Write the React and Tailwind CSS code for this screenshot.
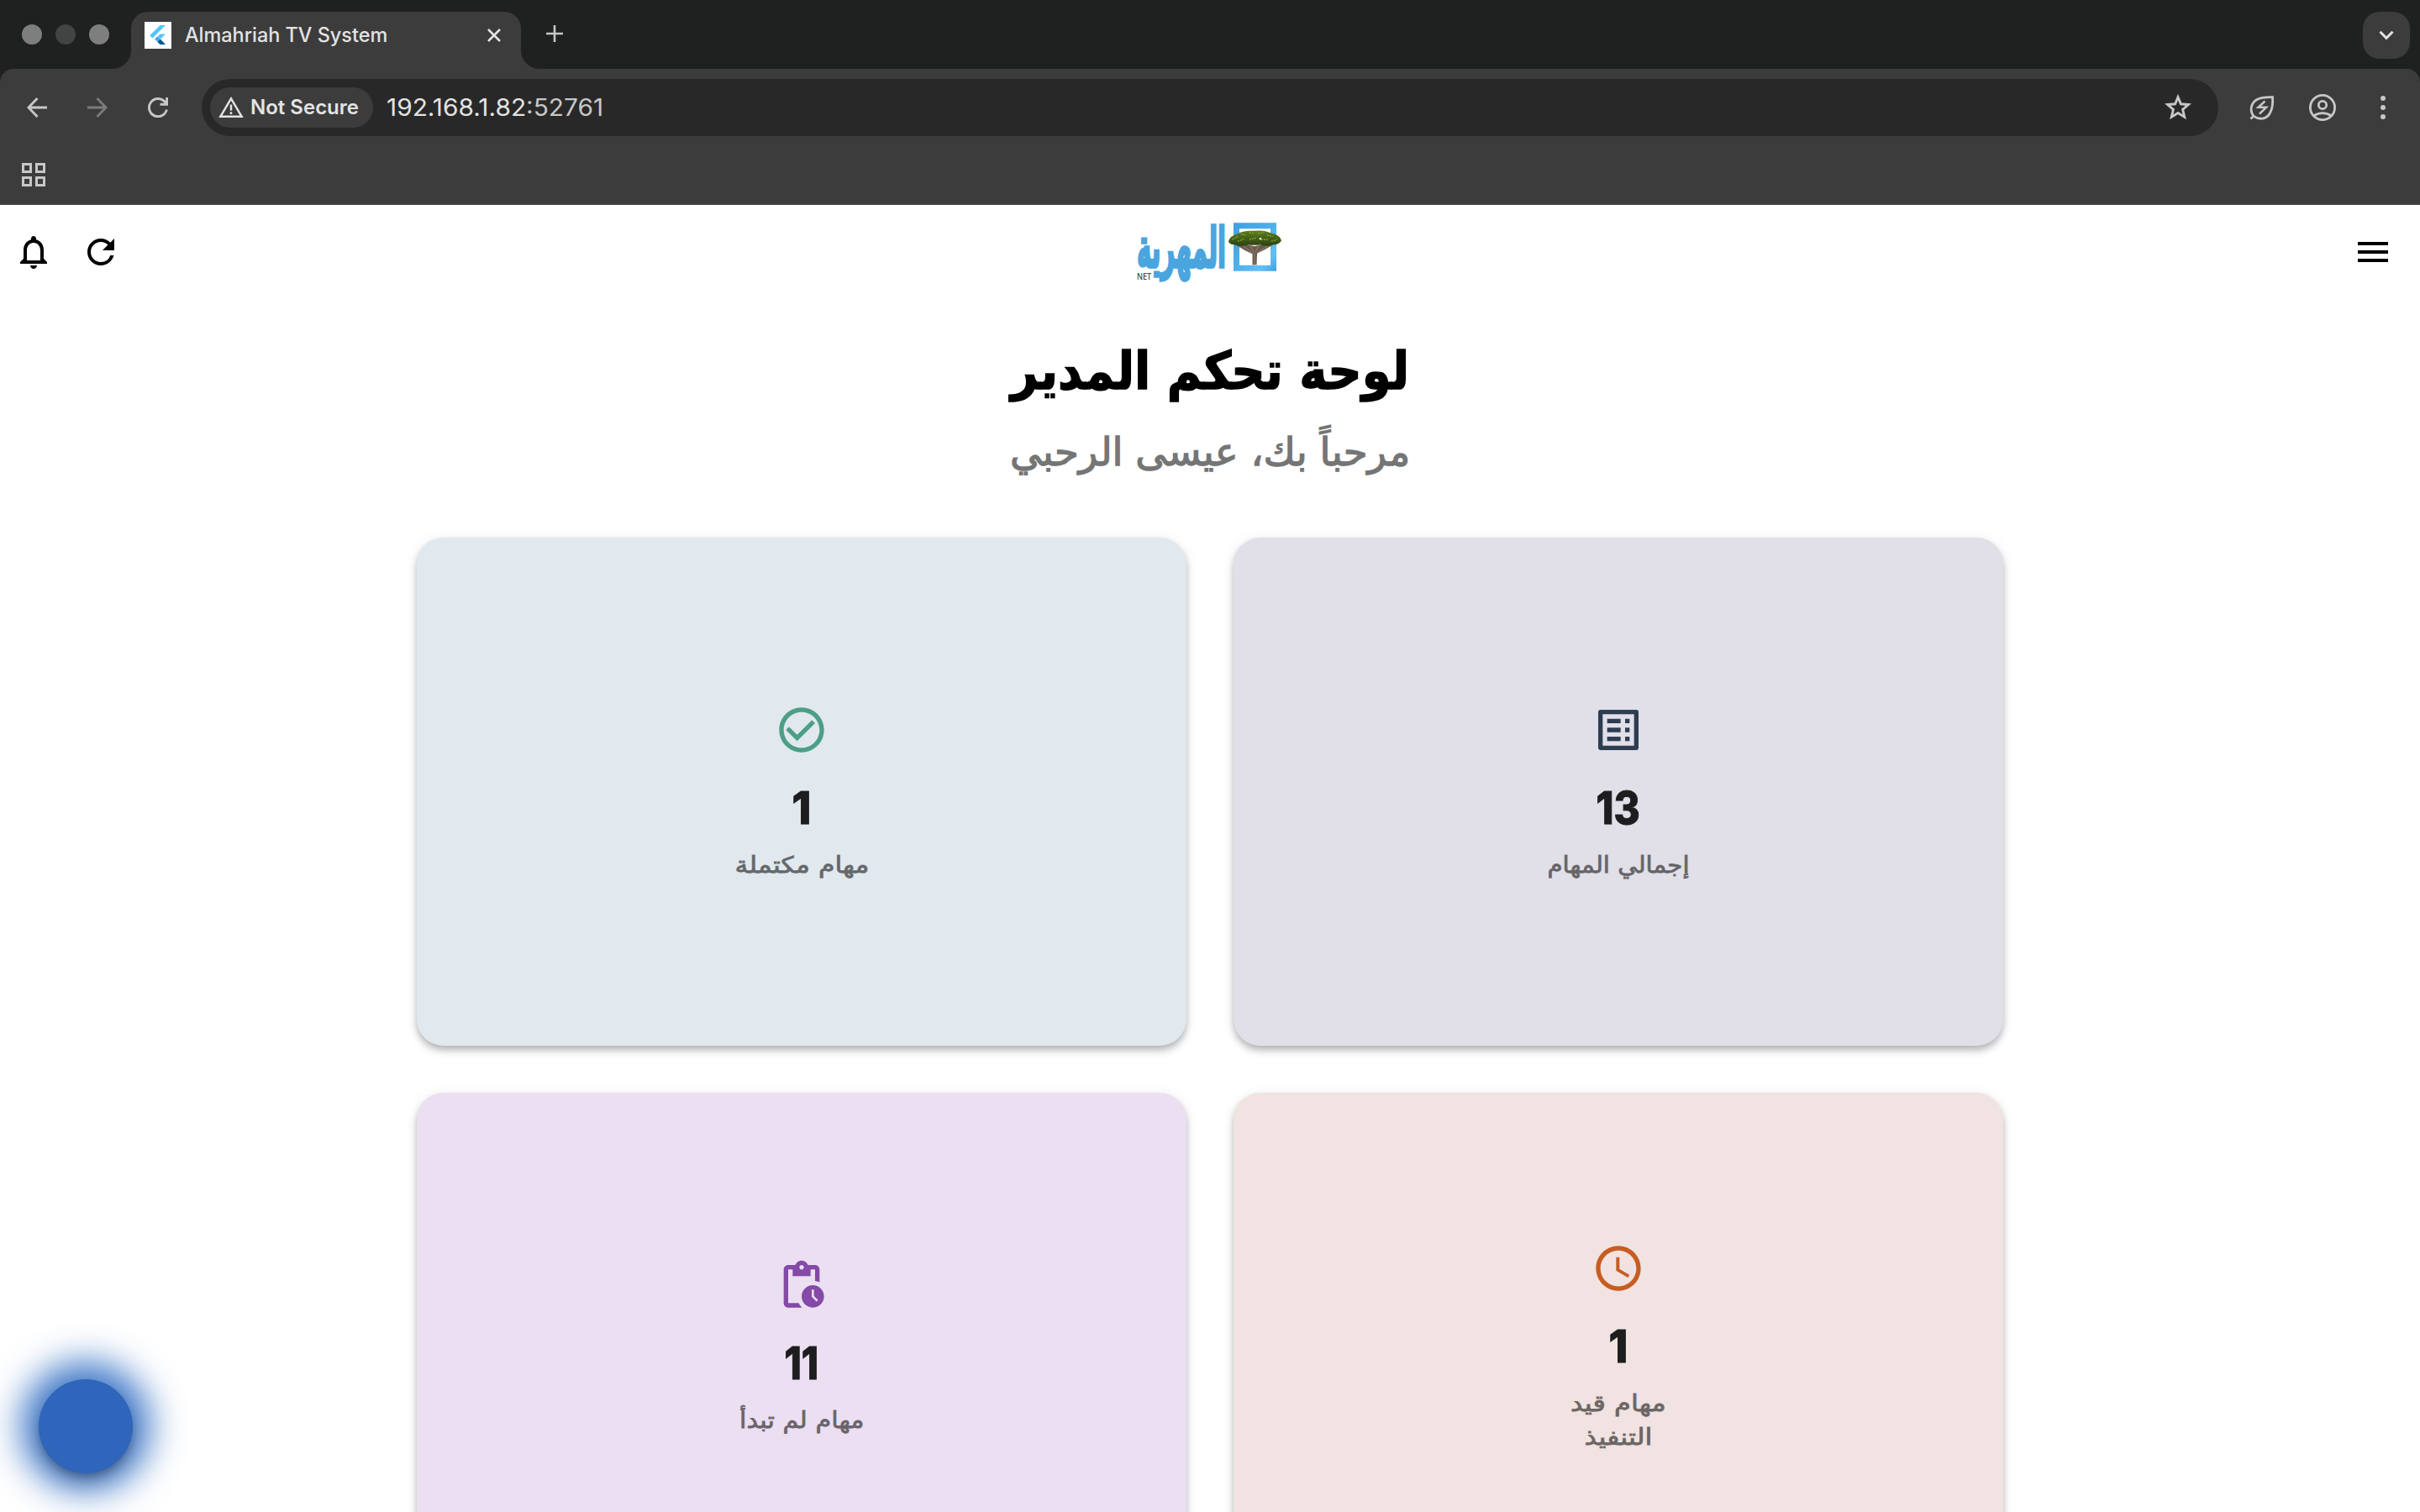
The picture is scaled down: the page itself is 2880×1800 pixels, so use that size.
import { useLayoutEffect, useRef, useState } from "react";
import {
  MdAccessTime,
  MdCheckCircleOutline,
  MdListAlt,
  MdMenu,
  MdPendingActions,
  MdRefresh,
} from "react-icons/md";

/* A line of text stretched horizontally to an exact width. */
function Fit({ width, className = "", children, dir }) {
  const ref = useRef(null);
  const [scale, setScale] = useState(1);
  useLayoutEffect(() => {
    setScale(width / ref.current.offsetWidth);
  }, [width]);
  return (
    <span className="flex shrink-0 justify-center" style={{ width }} dir={dir}>
      <span
        ref={ref}
        className={"inline-block shrink-0 whitespace-nowrap " + className}
        style={{ transform: `scaleX(${scale})` }}
      >
        {children}
      </span>
    </span>
  );
}

function FlutterIcon() {
  return (
    <svg viewBox="0 0 32 32" className="size-8 shrink-0 bg-white">
      <path d="M18.5 4H25L9.5 19.5 6.2 16.2Z" fill="#54c5f8" />
      <path d="M18.5 14.5H25L19 20.5l-3.2-3.2Z" fill="#54c5f8" />
      <path d="M12.2 20.6l3.3-3.3 3.3 3.3-3.3 3.3Z" fill="#3fa9f0" />
      <path d="M15.5 23.9l3.3-3.3L25 27h-6.5Z" fill="#01579b" />
    </svg>
  );
}

function TabStrip() {
  return (
    <div className="flex h-[82px] shrink-0 items-end bg-[#1f2120]">
      <div className="flex h-[82px] w-[134px] items-center gap-4 pl-[26px]">
        <span className="size-6 rounded-full bg-[#7e7e7e]" />
        <span className="size-6 rounded-full bg-[#424443]" />
        <span className="size-6 rounded-full bg-[#7e7e7e]" />
      </div>
      <div className="size-[22px] bg-[#3c3c3c]">
        <div className="size-full rounded-br-[22px] bg-[#1f2120]" />
      </div>
      <div className="flex h-[68px] w-[464px] items-center rounded-t-[20px] bg-[#3c3c3c] pb-3 pl-4">
        <FlutterIcon />
        <div className="ml-4">
          <Fit width={241} className="text-[24px] leading-8 font-medium text-[#e3e3e3]">
            Almahriah TV System
          </Fit>
        </div>
        <svg viewBox="0 0 16 16" className="ml-[119px] size-4" stroke="#e3e3e3" strokeWidth="2.6">
          <path d="M1 1 15 15M15 1 1 15" />
        </svg>
      </div>
      <div className="size-[22px] bg-[#3c3c3c]">
        <div className="size-full rounded-bl-[22px] bg-[#1f2120]" />
      </div>
      <svg viewBox="0 0 20 20" className="mb-8 ml-2 size-5" stroke="#c7c7c7" strokeWidth="2.6">
        <path d="M10 0V20M0 10H20" />
      </svg>
      <div className="mr-3 mb-3 ml-auto flex size-14 items-center justify-center rounded-[20px] bg-[#3c3c3c]">
        <svg viewBox="0 0 18 12" className="h-3 w-[18px]" fill="none" stroke="#e3e3e3" strokeWidth="3">
          <path d="M1.5 1.8 9 9.3 16.5 1.8" />
        </svg>
      </div>
    </div>
  );
}

function Toolbar() {
  return (
    <div className="shrink-0 bg-[#1f2120]">
      <div className="flex h-[92px] items-center rounded-t-2xl bg-[#3c3c3c]">
        <div className="flex w-60 items-center gap-12 pl-8">
          <svg viewBox="0 0 24 24" className="size-6" fill="none" stroke="#c7c7c7" strokeWidth="2.9">
            <path d="M12.5 1 1.9 12 12.5 23M2 12H24" />
          </svg>
          <svg viewBox="0 0 24 24" className="size-6" fill="none" stroke="#7b7b7b" strokeWidth="2.9">
            <path d="M11.5 1 22.1 12 11.5 23M22 12H0" />
          </svg>
          <svg viewBox="0 0 24 24" className="size-6" fill="none" stroke="#c7c7c7" strokeWidth="2.9">
            <path d="M22.4 14.5A10.6 10.6 0 1 1 20.4 5.5L23 8.3M22.6 0V8.3H14.5" />
          </svg>
        </div>
        <div className="flex h-[68px] w-[2400px] items-center rounded-full bg-[#282828] pl-2.5">
          <div className="flex h-12 w-[194px] items-center rounded-full bg-[#3c3c3c] pl-2.5">
            <svg viewBox="0 0 30 26" className="h-[26px] w-[30px]" fill="none" stroke="#e3e3e3" strokeWidth="2.5">
              <path d="M15 2.4 27.6 23.7H2.4ZM15 9.5V16.5M15 18.3V21" />
            </svg>
            <div className="ml-2">
              <Fit width={129} className="text-[24px] leading-8 font-semibold text-[#e3e3e3]">
                Not Secure
              </Fit>
            </div>
          </div>
          <div className="ml-4">
            <Fit width={258} className="text-[28px] leading-9 text-[#e3e3e3]">
              192.168.1.82<span className="text-[#c7c7c7]">:52761</span>
            </Fit>
          </div>
          <svg viewBox="0 0 32 32" className="mr-8 ml-auto size-8" fill="none" stroke="#c7c7c7" strokeWidth="2.9">
            <path d="M16 3.6 19.4 11.8 28.4 12.5 21.6 18.300 23.700 27.200 16 22.400 8.300 27.200 10.400 18.300 3.600 12.500 12.600 11.800Z" />
          </svg>
        </div>
        <svg viewBox="0 0 32 32" className="ml-9 size-8" fill="none" stroke="#c7c7c7" strokeWidth="2.8">
          <path d="M5.8 26C.8 19.5 3 10.5 10 6.5 15 3.6 21 3.4 28.6 3.6 29 11 28.5 17.5 25.5 22.5 21.5 30.5 12 31 5.8 26ZM2.5 29.5 7 25" />
          <path d="M19.5 8.5 11.5 15.8H21L13 23.5" strokeWidth="2.5" />
        </svg>
        <svg viewBox="0 0 32 32" className="ml-10 size-8" fill="none" stroke="#c7c7c7" strokeWidth="2.8">
          <circle cx="16" cy="16" r="14.6" />
          <circle cx="16" cy="13" r="4.7" />
          <path d="M5.5 26C11.5 21.6 20.5 21.6 26.5 26" />
        </svg>
        <div className="ml-[53px] flex flex-col gap-[5px]">
          <span className="size-1.5 rounded-full bg-[#c7c7c7]" />
          <span className="size-1.5 rounded-full bg-[#c7c7c7]" />
          <span className="size-1.5 rounded-full bg-[#c7c7c7]" />
        </div>
      </div>
      <div className="flex h-[70px] border-b-2 border-[#464446] bg-[#3c3c3c] pt-5 pl-[26px]">
        <div className="grid h-7 w-7 grid-cols-2 gap-1">
          <span className="border-3 border-[#c7c7c7]" />
          <span className="border-3 border-[#c7c7c7]" />
          <span className="border-3 border-[#c7c7c7]" />
          <span className="border-3 border-[#c7c7c7]" />
        </div>
      </div>
    </div>
  );
}

function Logo() {
  return (
    <svg viewBox="0 0 176 76" className="h-[76px] w-44 overflow-visible">
      <defs>
        <linearGradient id="frame" x1="0" y1="0" x2="1" y2="1">
          <stop offset="0" stopColor="#3f9fe0" />
          <stop offset="0.5" stopColor="#4fb0ec" />
          <stop offset="0.8" stopColor="#62c0f6" />
          <stop offset="1" stopColor="#3f9fe0" />
        </linearGradient>
        <linearGradient id="crown" x1="0" y1="0" x2="0" y2="1">
          <stop offset="0" stopColor="#5d8020" />
          <stop offset="1" stopColor="#2d4210" />
        </linearGradient>
      </defs>
      <text
        transform="translate(0 56) scale(1 1.5)"
        x="107"
        y="0"
        direction="rtl"
        textLength="106"
        lengthAdjust="spacingAndGlyphs"
        fontFamily="DejaVu Sans, sans-serif"
        fontWeight="700"
        fontSize="44"
        fill="#4aa5df"
        stroke="#4aa5df"
        strokeWidth="2.2"
      >
        المهرية
      </text>
      <text
        x="1"
        y="71"
        textLength="17"
        lengthAdjust="spacingAndGlyphs"
        fontFamily="Open Sans, sans-serif"
        fontSize="10"
        fontWeight="600"
        fill="#4a4a4a"
      >
        NET
      </text>
      <g transform="translate(-1 1.3)">
        <path d="M117 2H168V59.5H117ZM124 9V52.5H161V9Z" fillRule="evenodd" fill="url(#frame)" />
        <path d="M119 28 134 28 142 30 150 28 166 27 154 34 145 38.5 144.5 52H139.5L139.5 39 131 35Z" fill="#6b5a4c" />
        <path d="M128 29 140 38M136 27 141 37M148 27 143 37M158 29 145 38M142 38V52" stroke="#a08f80" strokeWidth="0.8" />
        <path
          d="M111 24Q112 18 122 15 128 11 140 11.5 154 10 161 14 172 16 174 23 172 28 164 28 156 31 149 28 141 29 135 28 126 31 118 28 112 28 111 24Z"
          fill="url(#crown)"
        />
        <path
          d="M115 22 123 18M126 15 132 17M136 13 142 15M146 15 153 13M157 17 164 18M122 24 130 21M136 22 144 20M150 22 158 22M162 24 169 22"
          stroke="#7d9d30"
          strokeWidth="1.5"
          strokeDasharray="2 1"
        />
        <circle cx="149" cy="21" r="1.3" fill="#e8ece0" />
      </g>
    </svg>
  );
}

function AppHeader() {
  return (
    <header className="grid h-28 shrink-0 grid-cols-3 items-center pr-8 pl-4">
      <div className="flex gap-8">
        <svg viewBox="0 0 24 24" className="size-12" fill="#000">
          <path d="M12 22c1.1 0 2-.9 2-2h-4c0 1.1.9 2 2 2zm6-6v-5c0-3.07-1.63-5.64-4.5-6.32V4c0-.83-.67-1.5-1.5-1.5s-1.5.67-1.5 1.5v.68C7.64 5.36 6 7.92 6 11v5l-2 2v1h16v-1l-2-2zm-2 1H8v-6c0-2.48 1.51-4.5 4-4.5s4 2.02 4 4.5v6z" />
        </svg>
        <MdRefresh className="size-12" />
      </div>
      <div className="flex justify-center pl-4">
        <Logo />
      </div>
      <MdMenu className="ml-auto size-12" />
    </header>
  );
}

function StatCard({ icon, value, valueWidth, lines, className }) {
  return (
    <div
      className={
        "flex h-[605px] flex-col items-center justify-center rounded-[32px] text-center shadow-[0_4px_8px_-2px_rgba(0,0,0,0.2),0_7px_10px_0_rgba(0,0,0,0.13),0_2px_16px_0_rgba(0,0,0,0.08)] " +
        className
      }
    >
      {icon}
      <div className="mt-6 h-[85px]">
        <Fit
          width={valueWidth}
          className="text-[54px] leading-[74px] font-extrabold text-[#1d1d1f] [-webkit-text-stroke:1px_#1d1d1f]"
        >
          {value}
        </Fit>
      </div>
      <div className="-mb-0.5">
        {lines.map(([text, width]) => (
          <div key={text} className="flex justify-center">
            <Fit
              width={width}
              dir="rtl"
              className="font-['DejaVu_Sans'] text-[27px] leading-10 text-black opacity-55 [-webkit-text-stroke:0.8px_black]"
            >
              {text}
            </Fit>
          </div>
        ))}
      </div>
    </div>
  );
}

export default function App() {
  return (
    <div className="flex h-[1800px] w-[2880px] flex-col overflow-hidden bg-white font-['Inter',sans-serif]">
      <TabStrip />
      <Toolbar />
      <AppHeader />
      <main className="flex shrink-0 flex-col items-center">
        <h1 className="mt-[38px] h-24">
          <Fit
            width={474}
            dir="rtl"
            className="font-['DejaVu_Sans'] text-[62px] leading-[96px] font-bold text-black [-webkit-text-stroke:1.5px_black]"
          >
            لوحة تحكم المدير
          </Fit>
        </h1>
        <p className="mt-2 h-20">
          <Fit
            width={476}
            dir="rtl"
            className="font-['DejaVu_Sans'] text-[46px] leading-[80px] text-[#757575] [-webkit-text-stroke:1.3px_#757575]"
          >
            مرحباً بك، عيسى الرحبي
          </Fit>
        </p>
        <div className="mt-[62px] grid grid-cols-[916px_916px] gap-14">
          <StatCard
            className="bg-[#e1e8ee]"
            icon={<MdCheckCircleOutline className="size-16 shrink-0 text-[#4c9f86]" />}
            value="1"
            valueWidth={23}
            lines={[["مهام مكتملة", 160]]}
          />
          <StatCard
            className="bg-[#e1dfe8]"
            icon={<MdListAlt className="size-16 shrink-0 -scale-x-100 text-[#2e3e50]" />}
            value="13"
            valueWidth={52}
            lines={[["إجمالي المهام", 169]]}
          />
          <StatCard
            className="bg-[#ebdff1]"
            icon={<MdPendingActions className="size-16 shrink-0 text-[#8549a7]" />}
            value="11"
            valueWidth={41}
            lines={[["مهام لم تبدأ", 149]]}
          />
          <StatCard
            className="bg-[#f1e3e1]"
            icon={<MdAccessTime className="size-16 shrink-0 text-[#c75d22]" />}
            value="1"
            valueWidth={23}
            lines={[
              ["مهام قيد", 114],
              ["التنفيذ", 81],
            ]}
          />
        </div>
      </main>
      <button className="fixed bottom-[46px] left-[46px] size-28 rounded-full bg-[#2f65ba] shadow-[0_6px_10px_-2px_rgba(0,0,0,0.2),0_12px_20px_0_rgba(0,0,0,0.14),0_0_42px_21px_rgba(32,98,190,0.85)]" />
    </div>
  );
}
